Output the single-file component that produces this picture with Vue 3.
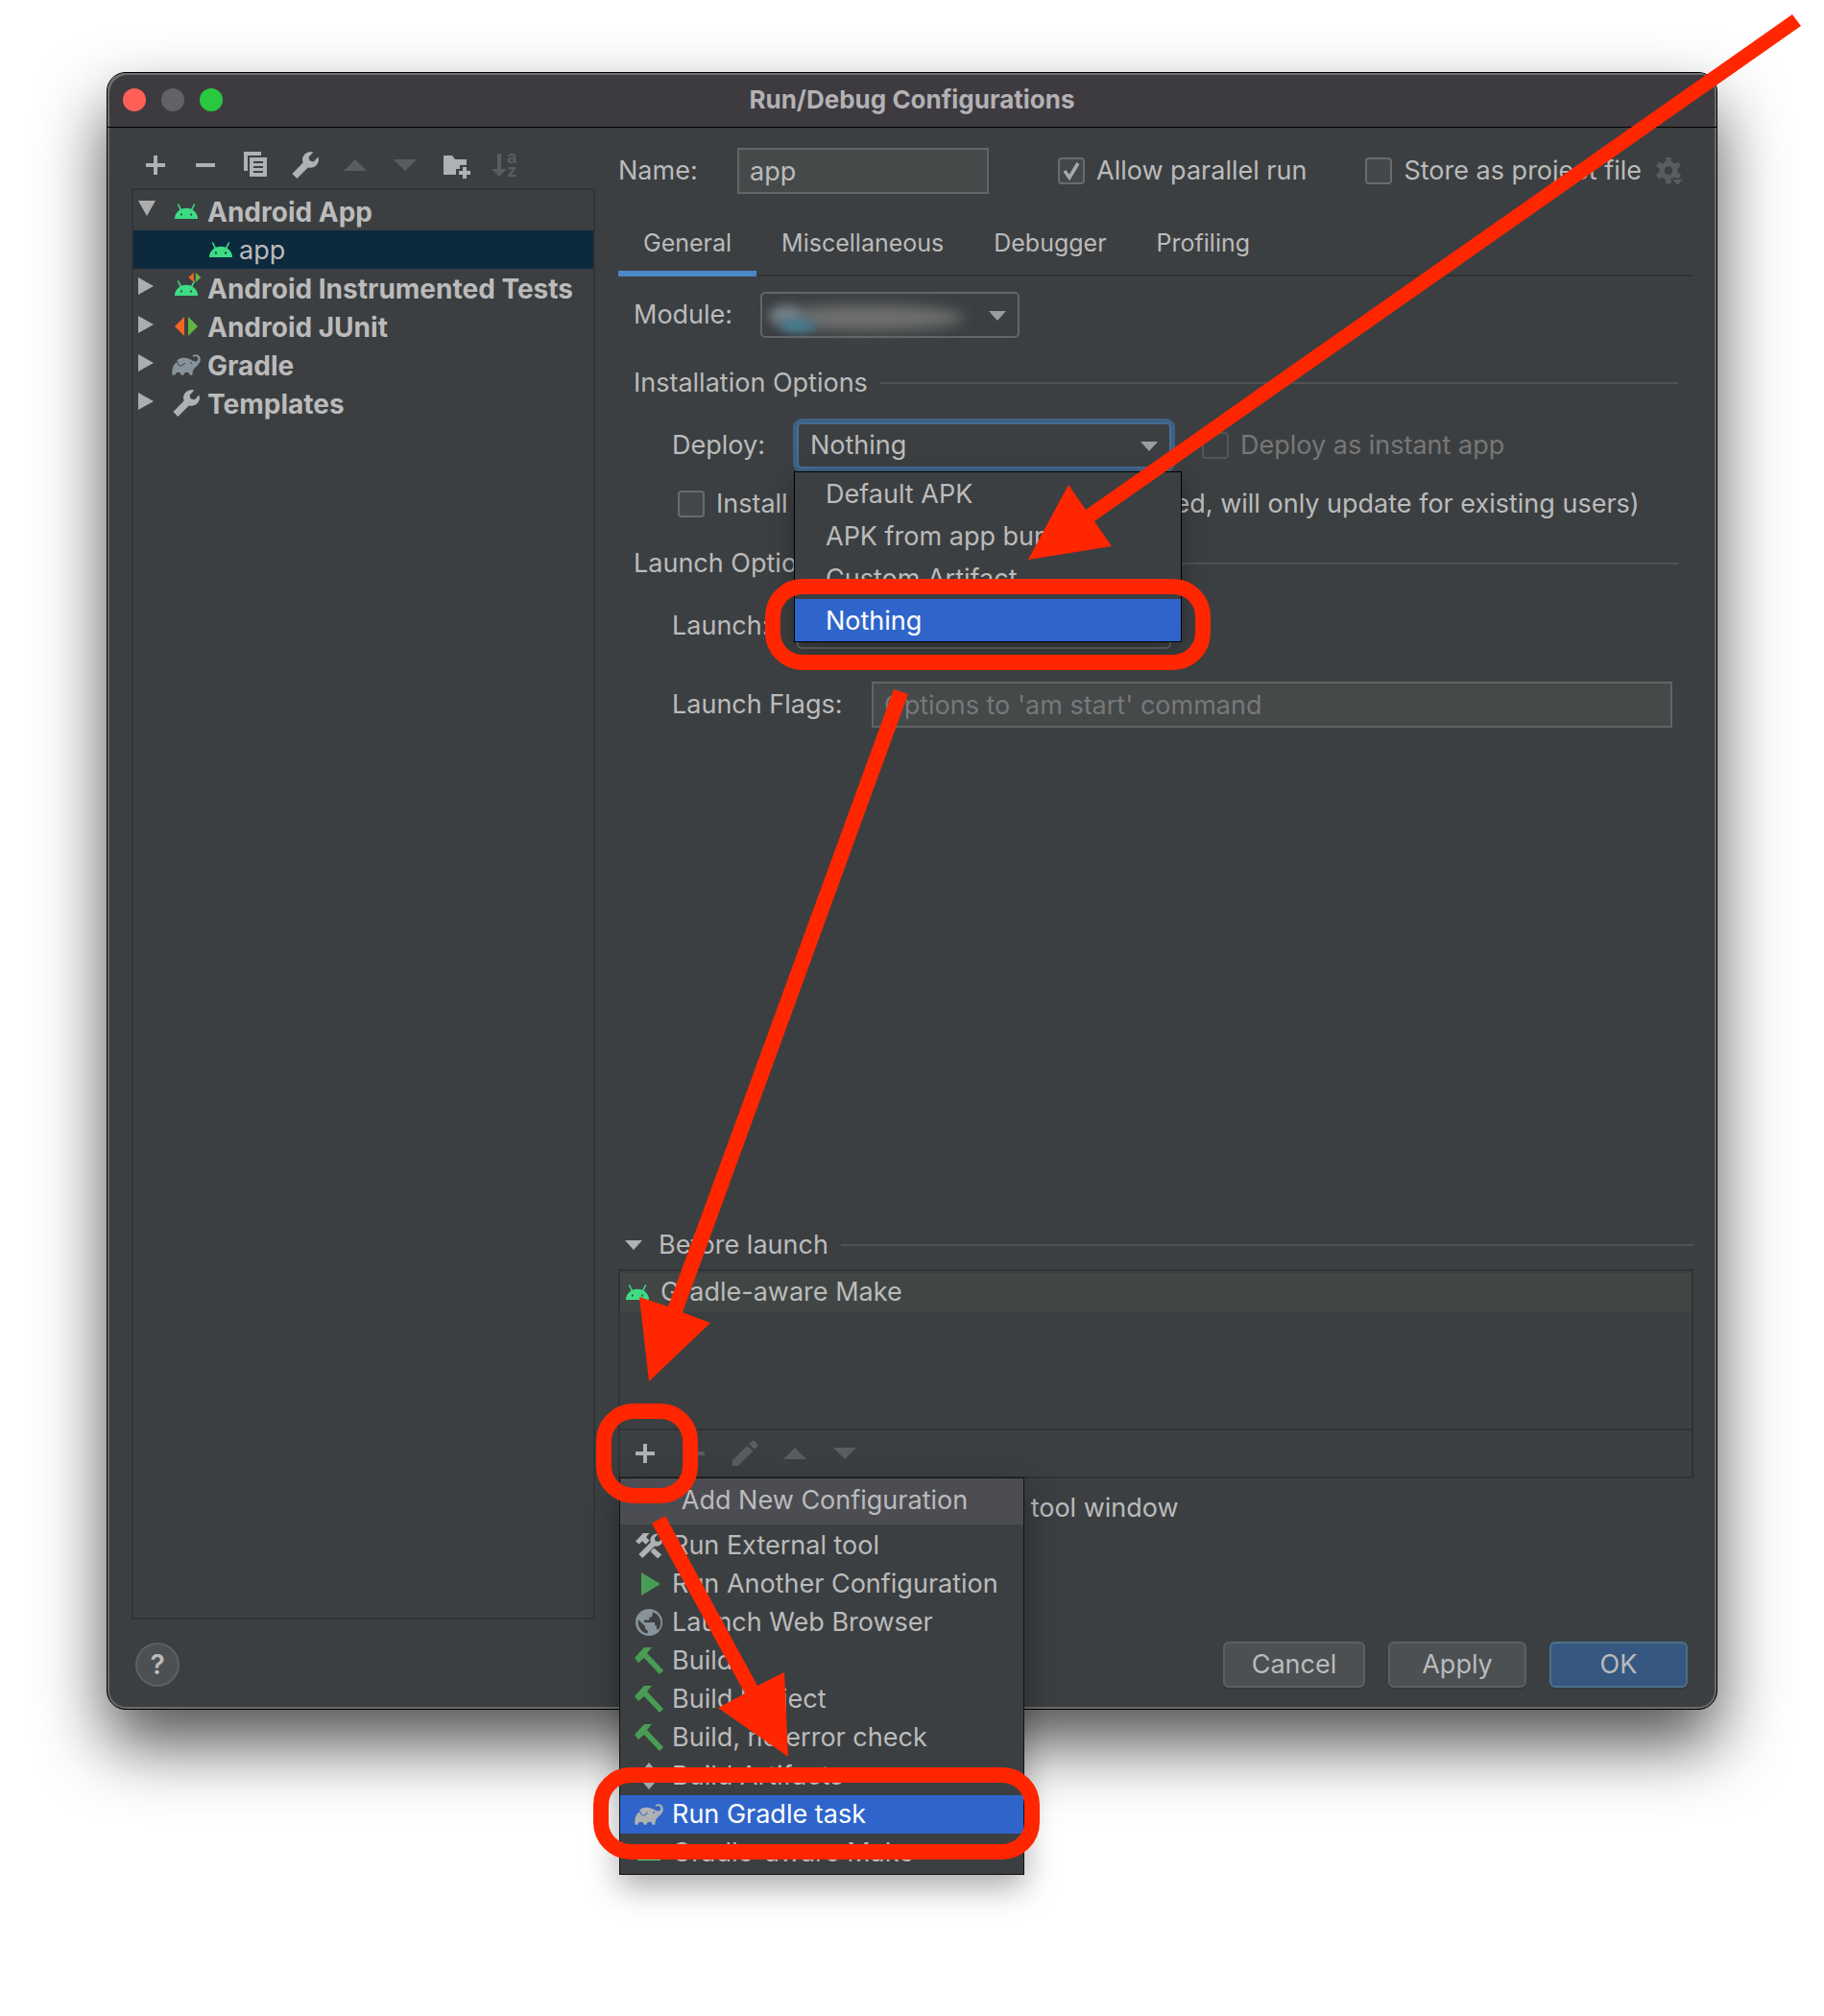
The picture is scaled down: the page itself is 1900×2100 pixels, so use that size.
<script setup>
import { ref } from 'vue'

const name = ref('app')
const parallelRun = ref(true)
const storeAsFile = ref(false)
const flags = ref('')
const deploy = ref('Nothing')
const launch = ref('Default Activity')
const activeTab = ref('General')

const treeTools = [
  { icon: 'plus', label: 'Add' },
  { icon: 'minus', label: 'Remove' },
  { icon: 'copy', label: 'Copy' },
  { icon: 'wrench', label: 'Edit templates' },
  { icon: 'up', label: 'Move up', off: true },
  { icon: 'down', label: 'Move down', off: true },
  { icon: 'folder', label: 'Create folder' },
]

const tree = [
  { text: 'Android App', icon: 'android', open: true },
  { text: 'app', icon: 'android', child: true },
  { text: 'Android Instrumented Tests', icon: 'android-test' },
  { text: 'Android JUnit', icon: 'junit' },
  { text: 'Gradle', icon: 'gradle' },
  { text: 'Templates', icon: 'wrench' },
]

const tabs = ['General', 'Miscellaneous', 'Debugger', 'Profiling']
const deployOptions = ['Default APK', 'APK from app bundle', 'Custom Artifact', 'Nothing']

const taskTools = [
  { icon: 'plus', label: 'Add task' },
  { icon: 'minus', label: 'Remove task', off: true },
  { icon: 'pencil', label: 'Edit task', off: true },
  { icon: 'up', label: 'Move task up', off: true },
  { icon: 'down', label: 'Move task down', off: true },
]

const menu = [
  { text: 'Run External tool', icon: 'tools' },
  { text: 'Run Another Configuration', icon: 'play' },
  { text: 'Launch Web Browser', icon: 'globe' },
  { text: 'Build', icon: 'hammer' },
  { text: 'Build Project', icon: 'hammer' },
  { text: 'Build, no error check', icon: 'hammer' },
  { text: 'Build Artifacts', icon: 'artifact' },
  { text: 'Run Gradle task', icon: 'gradle', selected: true },
  { text: 'Gradle-aware Make', icon: 'android' },
]
</script>

<template>
  <div class="page">
    <svg class="sprite" aria-hidden="true">
      <symbol id="plus" viewBox="0 0 16 16"><path fill="currentColor" d="M7 3h2v4h4v2H9v4H7V9H3V7h4z" /></symbol>
      <symbol id="minus" viewBox="0 0 16 16"><path fill="currentColor" d="M3 7h10v2H3z" /></symbol>
      <symbol id="copy" viewBox="0 0 16 16">
        <path fill="currentColor" d="M2 1h9v2H4v8H2z" />
        <path fill="currentColor" fill-rule="evenodd" d="M5 4h9v10H5zM7 6v1h5V6zM7 8.500v1h5v-1zM7 11v1h5v-1z" />
      </symbol>
      <symbol id="wrench" viewBox="0 0 16 16">
        <path fill="currentColor" d="M14.700 3.700 12.300 6.300 10.200 5.600 9.800 3.700 12.200 1.200A4.300 4.300 0 0 0 6.800 6.700L1.200 12.500 3.700 15 9.400 9.200A4.300 4.300 0 0 0 14.700 3.700Z" />
      </symbol>
      <symbol id="up" viewBox="0 0 16 16"><path fill="currentColor" d="M8 5l6 6H2z" /></symbol>
      <symbol id="down" viewBox="0 0 16 16"><path fill="currentColor" d="M2 5h12l-6 6z" /></symbol>
      <symbol id="folder" viewBox="0 0 16 16">
        <path fill="currentColor" d="M2 3h4.500L8 5h6v3h-3.500v2h-2v3H2z" />
        <path fill="currentColor" d="M12 9h2v2h2v2h-2v2h-2v-2h-2v-2h2z" />
      </symbol>
      <symbol id="android" viewBox="0 0 16 16">
        <path fill="#3ddc84" fill-rule="evenodd" d="M2 12a6 5.600 0 0 1 12 0zM5 9.300v.9h.9v-.9zM10.100 9.300v.9h.9v-.9z" />
        <path stroke="#3ddc84" stroke-width=".8" stroke-linecap="round" d="M3.800 4.500 5.200 7.300M12.200 4.500 10.800 7.300" />
      </symbol>
      <symbol id="android-test" viewBox="0 0 16 16">
        <use href="#android" width="16" height="16" />
        <path fill="#f26522" d="M11.900 0v5L9.200 2.500z" />
        <path fill="#62b543" d="M12.900 0v5l2.800-2.500z" />
      </symbol>
      <symbol id="junit" viewBox="0 0 16 16">
        <path fill="#f26522" d="M7 3v10L2 8z" />
        <path fill="#62b543" d="M9 3v10l5-5z" />
      </symbol>
      <symbol id="gradle" viewBox="-1 0 26 24">
        <path fill="currentColor" d="M22.695 4.297a3.807 3.807 0 0 0-5.290-.09.368.368 0 0 0 0 .533l.46.47a.363.363 0 0 0 .474.032 2.182 2.182 0 0 1 2.860 3.291c-3.023 3.020-7.056-5.447-16.211-1.083a1.240 1.240 0 0 0-.534 1.745l1.571 2.713a1.238 1.238 0 0 0 1.681.461l.037-.02-.029.02.688-.384a16.083 16.083 0 0 0 2.193-1.635.384.384 0 0 1 .499-.016.357.357 0 0 1 .016.534 16.435 16.435 0 0 1-2.316 1.741H8.770l-.696.39a1.958 1.958 0 0 1-.963.25 1.987 1.987 0 0 1-1.726-.989L3.900 9.696C1.060 11.720-.686 15.603.260 20.522a.363.363 0 0 0 .354.296h1.675a.363.363 0 0 0 .37-.331 2.478 2.478 0 0 1 4.915 0 .36.36 0 0 0 .357.317h1.638a.363.363 0 0 0 .357-.317 2.478 2.478 0 0 1 4.914 0 .363.363 0 0 0 .358.317h1.627a.363.363 0 0 0 .363-.357c.037-2.294.656-4.930 2.420-6.250 6.108-4.570 4.502-8.486 3.088-9.900zm-6.229 6.901l-1.165-.584a.73.73 0 1 1 1.165.587z" />
      </symbol>
      <symbol id="pencil" viewBox="0 0 16 16">
        <path fill="currentColor" d="M1.500 14.500v-3L9.200 4l2.900 2.900-7.700 7.600zM10.100 3.100l1.500-1.500q.8-.6 1.500 0l1.300 1.400q.6.700 0 1.400L13 5.900z" />
      </symbol>
      <symbol id="gear" viewBox="0 0 16 16">
        <path fill="none" stroke="currentColor" stroke-width="2.700" d="M7 4.300A3.500 3.500 0 1 1 7 11.300A3.500 3.500 0 1 1 7 4.300Z" />
        <path stroke="currentColor" stroke-width="2.800" d="M7 1v2.700M7 11.900v2.700M1.200 4.450l2.300 1.300M10.500 9.850l2.300 1.300M1.200 11.150l2.300-1.300M10.500 5.750l2.300-1.300" />
        <path fill="currentColor" stroke="#3c3f41" stroke-width=".6" d="M8.500 12.200h6.500l-3.250 3.600z" />
      </symbol>
      <symbol id="tools" viewBox="0 0 16 16">
        <path fill="currentColor" d="M1 5.700 5 1.500h3.200L6.500 3.600l1.800 1.800-2 2L4.500 5.600 2.800 7.200zM10.600 9.200l4 3.600-2 2-3.800-3.700z" />
        <path fill="currentColor" d="M15 4.200 13 6 11.300 5.600 10.900 4 12.700 2A3.200 3.200 0 0 0 8.900 6.200L2.700 12.500l1.900 2L11 8.200A3.200 3.200 0 0 0 15 4.200Z" />
      </symbol>
      <symbol id="play" viewBox="0 0 16 16"><path fill="#499c54" d="M4 2l10 6-10 6z" /></symbol>
      <symbol id="globe" viewBox="0 0 16 16">
        <circle cx="8" cy="8" r="7" fill="#87939a" />
        <path fill="#3c3f41" d="M2.500 6.600 6 10v1.300l1.300 1v1.500A6 6 0 0 1 2.500 6.600zM10 2.600a5.900 5.900 0 0 1 3 9.100l-1-.3V10l-1-.8V8H5.500V6.800h2.700V5.200h1.300z" />
      </symbol>
      <symbol id="hammer" viewBox="0 0 30 30">
        <path fill="#499c54" d="M0 12 10 1h8l-5 6 17 18-4 4L10 12l-6 5z" />
      </symbol>
      <symbol id="artifact" viewBox="0 0 16 16">
        <path fill="#9aa7b0" d="M8 1l3 3.500L8 8 5 4.500zM8 8l3 3.500L8 15l-3-3.500z" />
      </symbol>
      <symbol id="chevron" viewBox="0 0 18 10"><path fill="currentColor" d="M0 0h18l-9 10z" /></symbol>
    </svg>

    <main class="window">
      <header class="titlebar">
        <div class="lights">
          <button class="light red" aria-label="Close"></button>
          <button class="light grey" aria-label="Minimize"></button>
          <button class="light green" aria-label="Zoom"></button>
        </div>
        <h1>Run/Debug Configurations</h1>
      </header>

      <div class="body">
        <aside class="sidebar">
          <div class="tools">
            <button v-for="t in treeTools" :key="t.icon" class="tool" :disabled="t.off" :aria-label="t.label">
              <svg class="icon"><use :href="'#' + t.icon" /></svg>
            </button>
            <button class="tool" disabled aria-label="Sort configurations">
              <svg class="icon sort" viewBox="0 0 16 16">
                <path fill="currentColor" d="M4 2h2v8h3l-4 4-4-4h3z" />
                <text x="9" y="7" class="az">a</text>
                <text x="9" y="14" class="az">z</text>
              </svg>
            </button>
          </div>
          <ul class="tree">
            <li v-for="n in tree" :key="n.text" :class="{ child: n.child }">
              <svg v-if="!n.child" class="twisty" viewBox="0 0 18 18">
                <path v-if="n.open" d="M0 0h18L9 16z" />
                <path v-else d="M0 0l16 9-16 9z" />
              </svg>
              <svg class="icon" :class="n.icon"><use :href="'#' + n.icon" /></svg>
              <span>{{ n.text }}</span>
            </li>
          </ul>
        </aside>

        <section class="main">
          <div class="name-row">
            <label for="name">Name:</label>
            <input id="name" v-model="name" class="field" type="text" />
            <label class="check parallel"><input v-model="parallelRun" type="checkbox" />Allow parallel run</label>
            <label class="check store"><input v-model="storeAsFile" type="checkbox" />Store as project file</label>
            <button class="tool gear" disabled aria-label="Storage options">
              <svg class="icon"><use href="#gear" /></svg>
            </button>
          </div>

          <nav class="tabs">
            <button v-for="t in tabs" :key="t" :class="{ active: t === activeTab }" @click="activeTab = t">{{ t }}</button>
          </nav>

          <div class="panel">
            <div class="row module">
              <label for="module">Module:</label>
              <div class="combo module-combo">
                <select id="module"><option></option></select>
                <i class="smudge"></i><i class="smudge pale"></i><i class="smudge blue"></i>
                <svg class="arrow"><use href="#chevron" /></svg>
              </div>
            </div>

            <h2>Installation Options</h2>
            <div class="row deploy">
              <label for="deploy">Deploy:</label>
              <div class="combo focus">
                <select id="deploy" v-model="deploy">
                  <option v-for="o in deployOptions" :key="o">{{ o }}</option>
                </select>
                <svg class="arrow"><use href="#chevron" /></svg>
                <ul class="popup">
                  <li v-for="o in deployOptions" :key="o" :class="{ selected: o === deploy }">{{ o }}</li>
                </ul>
              </div>
              <label class="check disabled"><input type="checkbox" disabled />Deploy as instant app</label>
            </div>
            <div class="row install">
              <label class="check">
                <input type="checkbox" />
                <span>Install for all users</span>
                <span class="note">(if already installed, will only update for existing users)</span>
              </label>
            </div>

            <h2>Launch Options</h2>
            <div class="row launch">
              <label for="launch">Launch:</label>
              <div class="combo">
                <select id="launch" v-model="launch"><option>Default Activity</option></select>
                <svg class="arrow"><use href="#chevron" /></svg>
              </div>
            </div>
            <div class="row flags">
              <label for="flags">Launch Flags:</label>
              <input id="flags" v-model="flags" class="field" type="text" placeholder="Options to 'am start' command" />
            </div>
          </div>

          <h2 class="before"><svg class="fold"><use href="#chevron" /></svg>Before launch</h2>
          <div class="tasks">
            <div class="task-list">
              <div class="task"><svg class="icon"><use href="#android" /></svg>Gradle-aware Make</div>
            </div>
            <div class="tools task-tools">
              <button v-for="t in taskTools" :key="t.icon" class="tool" :disabled="t.off" :aria-label="t.label">
                <svg class="icon"><use :href="'#' + t.icon" /></svg>
              </button>
            </div>
            <div class="menu">
              <h3>Add New Configuration</h3>
              <ul>
                <li v-for="m in menu" :key="m.text">
                  <button :class="{ selected: m.selected }">
                    <svg class="icon" :class="m.icon"><use :href="'#' + m.icon" /></svg>{{ m.text }}
                  </button>
                </li>
              </ul>
            </div>
          </div>
          <div class="show-row">
            <label class="check"><input type="checkbox" />Show this page</label>
            <label class="check"><input type="checkbox" checked />Activate tool window</label>
          </div>
        </section>
      </div>

      <footer class="footer">
        <button class="help" aria-label="Help">?</button>
        <button class="btn cancel">Cancel</button>
        <button class="btn">Apply</button>
        <button class="btn primary">OK</button>
      </footer>
    </main>

    <svg class="marks" viewBox="0 0 1900 2100" aria-hidden="true">
      <g fill="#ff2600">
        <path d="M1867 15 1876 27 1140 543 1158 569 1071 583 1113 505 1131 531Z" />
        <path d="M931 718 946 723 711 1367 740 1378 676 1439 666 1351 696 1361Z" />
        <path d="M679 1587 693 1579 789 1756 817 1742 821 1830 748 1779 776 1764Z" />
      </g>
      <g fill="none" stroke="#ff2600" stroke-width="16">
        <rect x="805" y="611" width="448" height="79" rx="31" />
        <rect x="629" y="1470" width="90" height="88" rx="31" />
        <rect x="626" y="1849" width="449" height="80" rx="31" />
      </g>
    </svg>
  </div>
</template>

<style>
body {
  background: #fff;
}
</style>

<style scoped>
* {
  box-sizing: border-box;
}
.page {
  position: relative;
  min-height: 100vh;
  padding: 75px 111px 0;
  font-family: Inter, 'Liberation Sans', sans-serif;
  font-size: 27px;
  line-height: 32px;
  color: #bbb;
  white-space: nowrap;
}
.sprite {
  position: absolute;
  width: 0;
  height: 0;
}
.marks {
  position: absolute;
  z-index: 3;
  top: 0;
  left: 0;
  width: 1900px;
  height: 2100px;
  max-width: 100%;
  pointer-events: none;
}
button,
input,
select {
  font: inherit;
  color: inherit;
}
button {
  padding: 0;
  border: 0;
  background: none;
}
ul,
h1,
h2,
h3 {
  margin: 0;
  padding: 0;
  list-style: none;
  font-size: inherit;
}
.icon {
  display: block;
  flex: none;
  width: 32px;
  height: 32px;
}
.sort {
  overflow: visible;
}
.az {
  fill: currentColor;
  font: bold 9px Inter, sans-serif;
}

.window {
  display: flex;
  flex-direction: column;
  min-height: calc(100vh - 394px);
  border: 1px solid #000;
  border-radius: 20px;
  background: #3c3f41;
  box-shadow: inset 0 0 0 2px #6a6c6e, 0 36px 70px rgba(0, 0, 0, 0.68);
}
.titlebar {
  display: grid;
  grid-template-columns: 1fr auto 1fr;
  align-items: center;
  height: 57px;
  padding: 0 16px;
  border-bottom: 1px solid #000;
  border-radius: 19px 19px 0 0;
  background: #3d3b3f;
  box-shadow: inset 2px 2px 0 #6f7071, inset -2px 0 0 #6a6c6e;
}
.titlebar h1 {
  font-weight: 700;
  font-size: 26px;
  color: #b3b1b4;
}
.lights {
  display: flex;
  gap: 16px;
}
.light {
  width: 24px;
  height: 24px;
  border-radius: 50%;
}
.red {
  background: #ff5f57;
}
.grey {
  background: #616266;
}
.green {
  background: #28c840;
}

.body {
  display: flex;
  flex: 1;
  gap: 24px;
  padding: 0 24px 0 25px;
}
.sidebar {
  display: flex;
  flex-direction: column;
  flex: none;
  width: 483px;
}
.tools {
  display: flex;
  gap: 20px;
}
.sidebar .tools {
  padding: 23px 0 8px 9px;
}
.tool {
  color: #afb1b3;
}
.tool:disabled {
  color: #5b5c5d;
}
.tree {
  flex: 1;
  padding-top: 2px;
  border: 2px solid #323436;
  font-weight: 700;
  font-size: 28px;
}
.tree li {
  display: flex;
  align-items: center;
  height: 40px;
  padding-left: 5px;
}
.tree li.child {
  gap: 3px;
  padding-left: 75px;
  background: #0d293e;
  font-weight: 400;
  font-size: 27px;
}
.tree span {
  padding-top: 2px;
}
.twisty {
  width: 18px;
  height: 18px;
  margin: 0 16px 4px 0;
  fill: #adadad;
}
.tree .icon {
  margin-right: 6px;
}
.tree .child .icon {
  margin-right: 0;
}
.icon.gradle {
  color: #87939a;
}
.icon.wrench {
  color: #afb1b3;
}

.main {
  display: flex;
  flex-direction: column;
  flex: 1;
  min-width: 0;
}
.name-row {
  display: flex;
  align-items: center;
  padding-top: 21px;
}
.name-row > label:first-child {
  width: 124px;
}
.field {
  height: 48px;
  padding: 0 11px;
  border: 2px solid #646464;
  background: #45494a;
  outline: 0;
}
.field::placeholder {
  color: #787878;
  opacity: 1;
}
.name-row .field {
  width: 262px;
}
.check {
  display: flex;
  align-items: center;
  gap: 12px;
}
.check input {
  flex: none;
  width: 28px;
  height: 28px;
  margin: 0;
  border: 2px solid #6b6b6b;
  border-radius: 4px;
  background: #43494a;
  appearance: none;
}
.check input:checked {
  background: #43494a url("data:image/svg+xml,%3Csvg xmlns='http://www.w3.org/2000/svg' viewBox='0 0 24 24'%3E%3Cpath fill='none' stroke='%23a9a9a9' stroke-width='3.500' d='M5 12l5 7 9-15'/%3E%3C/svg%3E");
}
.check.disabled {
  color: #777;
}
.check.disabled input {
  border-color: #545556;
  background: none;
}
.parallel {
  margin-left: 72px;
}
.store {
  margin-left: auto;
}
.gear {
  margin: 0 8px 0 14px;
}

.tabs {
  display: flex;
  height: 86px;
  padding-top: 18px;
  border-bottom: 2px solid #323232;
  font-size: 25px;
}
.tabs button {
  position: relative;
  padding: 0 26px;
}
.tabs .active::after {
  content: '';
  position: absolute;
  right: 0;
  bottom: -2px;
  left: 0;
  height: 6px;
  background: #4a88c7;
}

.panel {
  flex: 1;
  padding: 16px 16px 0 16px;
}
.row {
  display: flex;
  align-items: center;
  padding-left: 40px;
}
.row.module {
  margin-bottom: 31px;
  padding-left: 0;
}
.module label {
  width: 132px;
}
h2 {
  display: flex;
  align-items: center;
  gap: 13px;
  font-weight: 400;
}
h2::after {
  content: '';
  flex: 1;
  height: 2px;
  background: #515253;
}
.combo {
  position: relative;
  width: 390px;
  height: 48px;
}
.module-combo {
  width: 270px;
}
.combo select {
  width: 100%;
  height: 100%;
  padding: 0 12px;
  border: 2px solid #646464;
  border-radius: 5px;
  background: #3c3f41;
  outline: 0;
  appearance: none;
}
.focus select {
  border-color: #466d94;
  box-shadow: 0 0 0 4px #3d6185;
}
.arrow {
  position: absolute;
  top: 20px;
  right: 14px;
  width: 18px;
  height: 10px;
  color: #9a9da0;
  pointer-events: none;
}
.smudge {
  position: absolute;
  top: 14px;
  left: 10px;
  width: 202px;
  height: 26px;
  border-radius: 50%;
  background: #6f7070;
  filter: blur(7px);
}
.smudge.pale {
  top: 15px;
  width: 32px;
  height: 18px;
  background: #75828d;
  filter: blur(6px);
}
.smudge.blue {
  top: 29px;
  left: 20px;
  width: 38px;
  height: 13px;
  background: #437f94;
  filter: blur(5px);
}
.deploy {
  margin: 25px 0 21px;
}
.deploy > label:first-child,
.launch > label {
  width: 130px;
}
.deploy .disabled {
  margin-left: 32px;
}
.popup {
  position: absolute;
  z-index: 1;
  top: 51px;
  left: -3px;
  width: 404px;
  border: 1px solid #000;
  background: #3c3f41;
  box-shadow: 0 8px 24px rgba(0, 0, 0, 0.3);
}
.popup li {
  height: 44px;
  padding-left: 32px;
  line-height: 45px;
}
.selected {
  background: #2f65ca;
  color: #fff;
}
.install {
  margin-bottom: 30px;
  padding-left: 46px;
}
.install .note {
  margin-left: 24px;
}
.launch {
  margin: 25px 0 34px;
}
.flags label {
  width: 208px;
}
.flags .field {
  flex: 1;
  margin-right: 6px;
}

.before {
  padding-left: 7px;
}
.fold {
  width: 18px;
  height: 10px;
  margin-right: 4px;
  color: #afb1b3;
}
.tasks {
  position: relative;
  margin-top: 9px;
  border: 2px solid #323232;
}
.task-list {
  height: 166px;
  padding-top: 2px;
  border-bottom: 2px solid #323232;
}
.task {
  display: flex;
  align-items: center;
  gap: 8px;
  height: 40px;
  padding-left: 2px;
  background: #414645;
}
.task-tools {
  height: 48px;
  padding: 8px 0 8px 10px;
}
.menu {
  position: absolute;
  z-index: 2;
  top: 215px;
  left: -1px;
  width: 422px;
  border: 1px solid #111;
  background: #3c3f41;
  box-shadow: 0 12px 32px rgba(0, 0, 0, 0.35);
}
.menu h3 {
  height: 48px;
  padding-left: 6px;
  background: #4b4d52;
  font-weight: 400;
  line-height: 46px;
  text-align: center;
}
.menu ul {
  padding: 2px 0;
}
.menu button {
  display: flex;
  align-items: center;
  gap: 8px;
  width: 100%;
  height: 40px;
  padding-left: 14px;
}
.menu .tools,
.menu .selected .icon {
  color: #afb1b3;
}
.menu .hammer {
  padding: 1px;
}
.show-row {
  display: flex;
  gap: 32px;
  height: 147px;
  padding: 15px 0 0 10px;
  align-items: flex-start;
}
.footer {
  display: flex;
  align-items: center;
  gap: 24px;
  height: 93px;
  padding: 0 30px 0 29px;
}
.btn {
  width: 144px;
  height: 48px;
  border: 2px solid #5e6060;
  border-radius: 6px;
  background: #4c5052;
  box-shadow: 0 2px 0 #36393b;
}
.btn.cancel {
  width: 148px;
  margin-left: auto;
}
.btn.primary {
  border-color: #4c708c;
  background: #365880;
}
.help {
  width: 46px;
  height: 46px;
  border: 2px solid #5e6060;
  border-radius: 50%;
  background: #4c5052;
  font-weight: 600;
  font-size: 28px;
}
</style>
